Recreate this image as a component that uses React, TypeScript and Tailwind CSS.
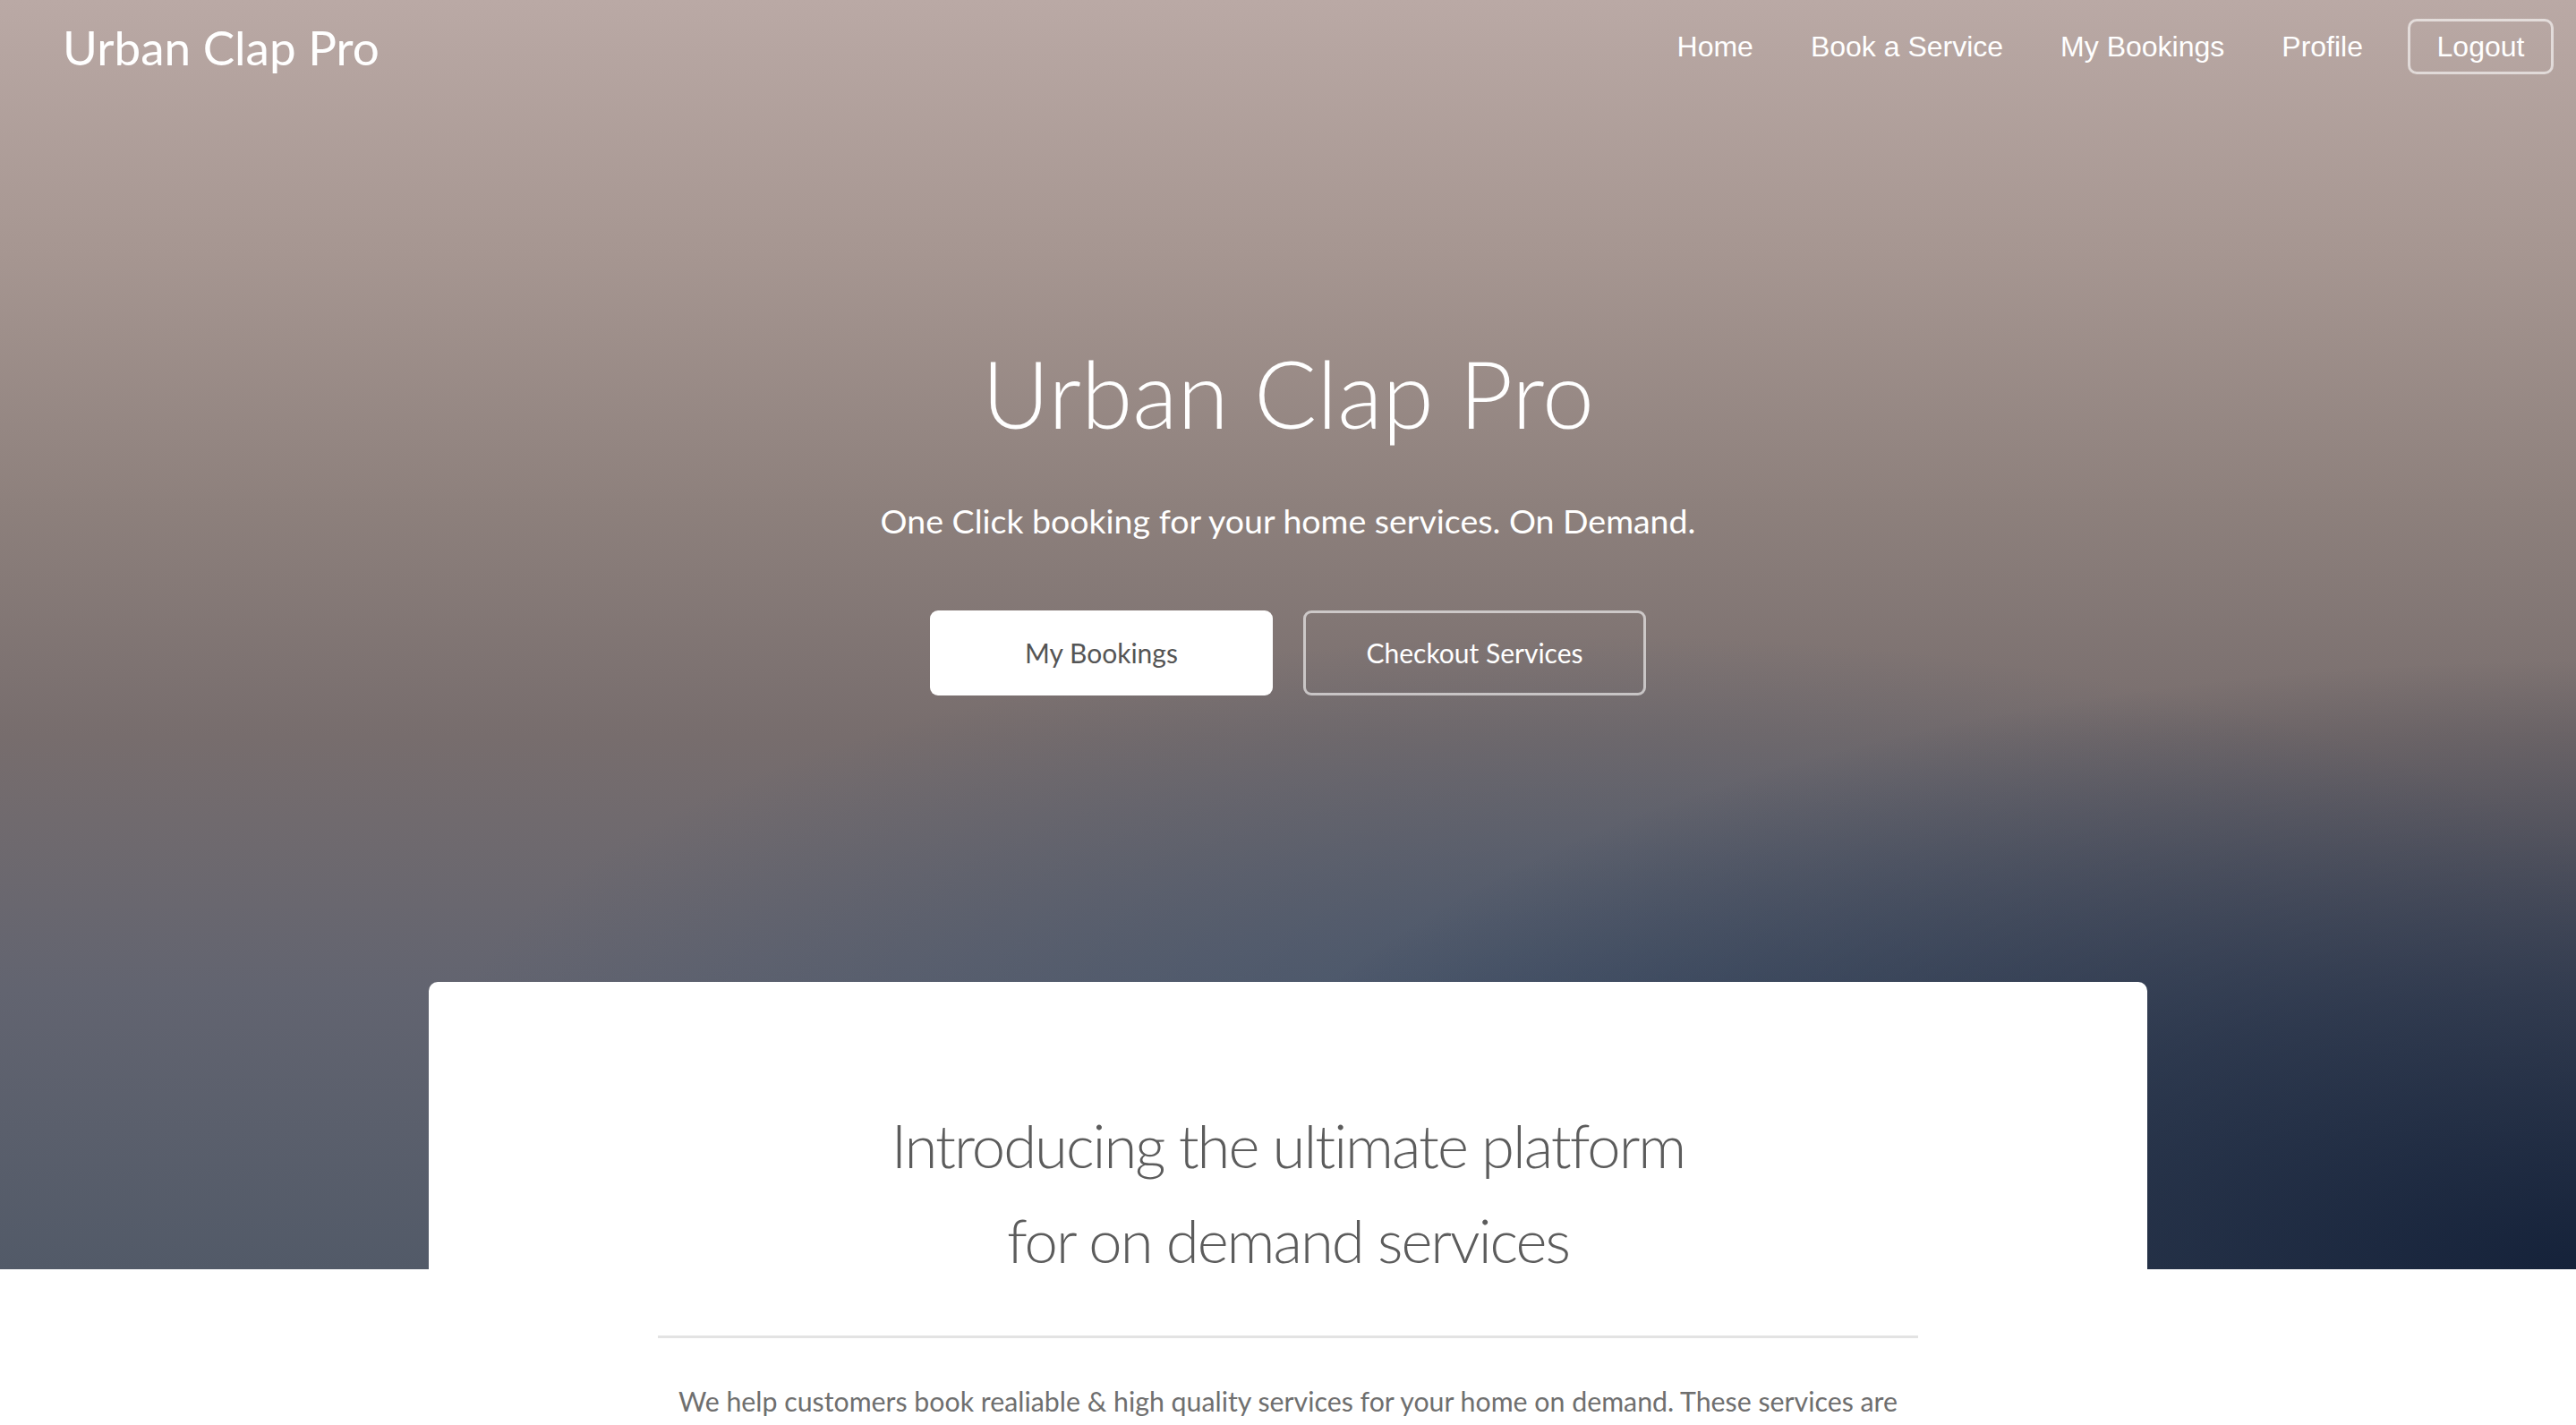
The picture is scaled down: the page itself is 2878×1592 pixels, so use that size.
import React from 'react';

const navLinks = ['Home', 'Book a Service', 'My Bookings', 'Profile'];

const Navbar: React.FC = () => (
  <header className="flex h-[104px] items-center justify-between pl-[70px] pr-[25px]">
    <a href="#" className="font-['Lato',sans-serif] text-[53px] leading-none text-white">Urban Clap Pro</a>
    <nav className="flex items-center font-['Liberation_Sans',Arial,sans-serif] text-[32px] leading-none text-white">
      {navLinks.map((l) => (
        <a key={l} href="#" className="px-[32px]">{l}</a>
      ))}
      <button className="ml-[18px] h-[62px] w-[163px] rounded-[10px] border-[3px] border-white/60 text-white">Logout</button>
    </nav>
  </header>
);

export default function App() {
  return (
    <div className="min-h-screen bg-white font-['Lato',sans-serif]">
      <section className="h-[1418px] bg-[radial-gradient(ellipse_55%_48%_at_100%_100%,#15223a_0%,rgba(21,34,58,0.6)_45%,rgba(21,34,58,0)_100%),radial-gradient(ellipse_45%_35%_at_62%_85%,rgba(58,78,104,0.75)_0%,rgba(58,78,104,0)_100%),linear-gradient(to_bottom,#baa9a5_0%,#a69691_20%,#8d807c_40%,#776d6d_58%,#626470_78%,#525a68_100%)]">
        <Navbar />
        <div className="flex flex-col items-center pt-[273px] text-white">
          <h1 className="text-[104px] font-light leading-[1.2]">Urban Clap Pro</h1>
          <p className="mt-[57px] text-[37.5px] leading-[1.2]">One Click booking for your home services. On Demand.</p>
          <div className="mt-[78px] flex gap-[34px]">
            <button className="h-[95px] w-[383px] rounded-[9px] bg-white text-[30px] text-[#555]">My Bookings</button>
            <button className="h-[95px] w-[383px] rounded-[9px] border-[3px] border-white/60 text-[30px] text-white">Checkout Services</button>
          </div>
        </div>
      </section>

      <section className="relative z-10 mx-auto -mt-[321px] w-[1920px] rounded-[10px] bg-white pt-[129px]">
        <h2 className="text-center text-[67px] font-light leading-[106px] tracking-[-2px] text-[#5c5c5c]">
          Introducing the ultimate platform
          <br />
          for on demand services
        </h2>
        <hr className="mx-auto mt-[54px] w-[1408px] border-t-[3px] border-[#e3e3e3]" />
        <p className="mx-auto mt-[43px] w-[1408px] text-center text-[30.3px] leading-[1.8] text-[#6f6f6f]">
          We help customers book realiable &amp; high quality services for your home on demand. These services are
          <br />
          delivered by verified professionals at a time that suits you.
        </p>
      </section>
    </div>
  );
}
